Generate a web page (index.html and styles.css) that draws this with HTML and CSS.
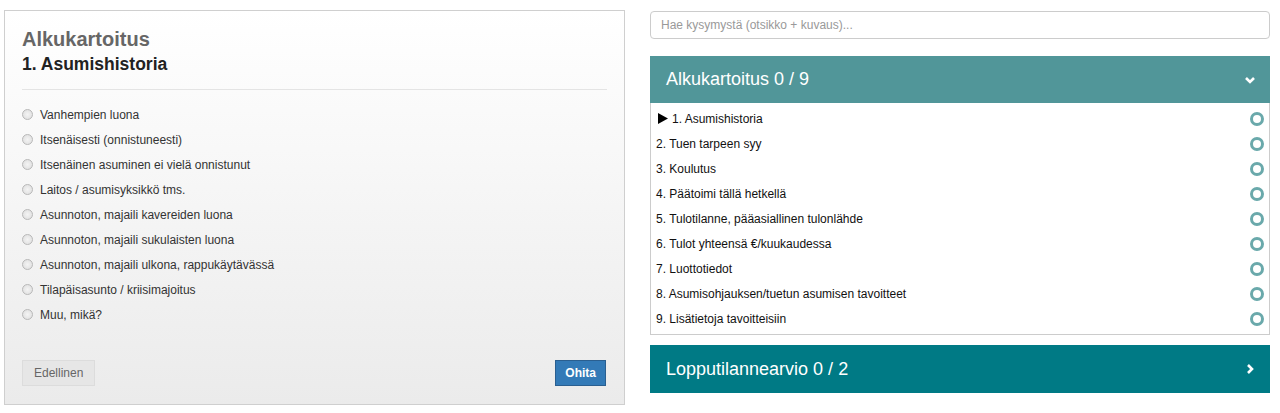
FILE: index.html
```html
<!DOCTYPE html>
<html>
<head>
  <title>Alkukartoitus</title>
  <link rel="stylesheet" href="styles.css">
</head>
<body>
  <div class="page">
    <div class="question-panel">
      <h2 class="survey-title">Alkukartoitus</h2>
      <h3 class="question-title">1. Asumishistoria</h3>
      <hr>
      <ul class="options">
        <li><span class="radio"></span>Vanhempien luona</li>
        <li><span class="radio"></span>Itsenäisesti (onnistuneesti)</li>
        <li><span class="radio"></span>Itsenäinen asuminen ei vielä onnistunut</li>
        <li><span class="radio"></span>Laitos / asumisyksikkö tms.</li>
        <li><span class="radio"></span>Asunnoton, majaili kavereiden luona</li>
        <li><span class="radio"></span>Asunnoton, majaili sukulaisten luona</li>
        <li><span class="radio"></span>Asunnoton, majaili ulkona, rappukäytävässä</li>
        <li><span class="radio"></span>Tilapäisasunto / kriisimajoitus</li>
        <li><span class="radio"></span>Muu, mikä?</li>
      </ul>
      <div class="buttons">
        <button class="btn btn-prev">Edellinen</button>
        <button class="btn btn-skip">Ohita</button>
      </div>
    </div>

    <div class="sidebar">
      <input class="search" type="text" placeholder="Hae kysymystä (otsikko + kuvaus)...">

      <div class="section">
        <div class="section-header open">
          <span>Alkukartoitus 0 / 9</span>
          <svg class="chevron" width="12" height="12" viewBox="0 0 12 12"><path d="M2 4 L6 8 L10 4" fill="none" stroke="#fff" stroke-width="2.6"/></svg>
        </div>
        <ul class="question-list">
          <li><span class="q-name"><svg class="arrow" width="10" height="11" viewBox="0 0 10 11"><path d="M0 0 L10 5.5 L0 11 Z" fill="#000"/></svg>1. Asumishistoria</span><span class="status"></span></li>
          <li><span class="q-name">2. Tuen tarpeen syy</span><span class="status"></span></li>
          <li><span class="q-name">3. Koulutus</span><span class="status"></span></li>
          <li><span class="q-name">4. Päätoimi tällä hetkellä</span><span class="status"></span></li>
          <li><span class="q-name">5. Tulotilanne, pääasiallinen tulonlähde</span><span class="status"></span></li>
          <li><span class="q-name">6. Tulot yhteensä €/kuukaudessa</span><span class="status"></span></li>
          <li><span class="q-name">7. Luottotiedot</span><span class="status"></span></li>
          <li><span class="q-name">8. Asumisohjauksen/tuetun asumisen tavoitteet</span><span class="status"></span></li>
          <li><span class="q-name">9. Lisätietoja tavoitteisiin</span><span class="status"></span></li>
        </ul>
      </div>

      <div class="section">
        <div class="section-header closed">
          <span>Lopputilannearvio 0 / 2</span>
          <svg class="chevron" width="12" height="12" viewBox="0 0 12 12"><path d="M4 2 L8 6 L4 10" fill="none" stroke="#fff" stroke-width="2.6"/></svg>
        </div>
      </div>
    </div>
  </div>
</body>
</html>
```
FILE: styles.css
```css
/* Layout */
body {
  font-family: "Liberation Sans", Arial, sans-serif;
  margin: 0;
  padding: 0;
  color: #333;
}
.page {
  display: flex;
  gap: 25px;
  padding: 10px 10px 0 4px;
}

/* Question panel */
.question-panel {
  width: 621px;
  height: 395px;
  box-sizing: border-box;
  border: 1px solid #cfcfcf;
  background: linear-gradient(#ffffff, #ebebeb);
  padding: 16px 17px 0 17px;
  display: flex;
  flex-direction: column;
}
.survey-title {
  margin: 0;
  font-size: 20px;
  font-weight: bold;
  color: #666;
  line-height: 24px;
}
.question-title {
  margin: 1px 0 0 0;
  font-size: 17.5px;
  font-weight: bold;
  color: #222;
  line-height: 24px;
}
hr {
  border: none;
  border-top: 1px solid #e4e4e4;
  margin: 13px 0 12px 0;
}
.options {
  list-style: none;
  margin: 0;
  padding: 0;
}
.options li {
  display: flex;
  align-items: center;
  height: 25px;
  font-size: 12px;
  color: #333;
}
.radio {
  width: 9px;
  height: 9px;
  border: 1px solid #b8b8b8;
  border-radius: 50%;
  background: radial-gradient(#f4f4f4, #dcdcdc);
  margin: 0 7px 0 0;
}
.buttons {
  margin-top: auto;
  margin-bottom: 18px;
  display: flex;
  justify-content: space-between;
}
.btn {
  font-family: "Liberation Sans", Arial, sans-serif;
  font-size: 12px;
  height: 26px;
  padding: 0 11px;
  border-radius: 0;
}
.btn-prev {
  background: #e6e6e6;
  border: 1px solid #dcdcdc;
  color: #666;
  font-weight: normal;
}
.btn-skip {
  background: #337ab7;
  border: 1px solid #2a5f90;
  color: #fff;
  font-weight: bold;
  padding: 0 9px;
  margin-right: 1px;
}

/* Sidebar */
.sidebar {
  width: 620px;
  padding-top: 1px;
}
.search {
  width: 100%;
  height: 28px;
  box-sizing: border-box;
  border: 1px solid #ccc;
  border-radius: 4px;
  padding: 0 10px;
  font-family: "Liberation Sans", Arial, sans-serif;
  font-size: 12px;
  margin-bottom: 17px;
}
.search::placeholder {
  color: #999;
}
.section {
  margin-bottom: 10px;
}
.section-header {
  height: 47px;
  display: flex;
  align-items: center;
  justify-content: space-between;
  padding: 0 16px;
  color: #fff;
  font-size: 18px;
}
.section-header.open {
  background: #519699;
}
.section-header.closed {
  background: #007a85;
  height: 48px;
}
.chevron {
  margin-right: -2px;
}
.question-list {
  list-style: none;
  margin: 0;
  padding: 3px 0 3px 0;
  border: 1px solid #ccc;
  border-top: none;
}
.question-list li {
  height: 25px;
  display: flex;
  align-items: center;
  justify-content: space-between;
  padding: 0 5px 0 5px;
  font-size: 12px;
  color: #111;
}
.q-name {
  display: flex;
  align-items: center;
}
.arrow {
  margin: 0 4px 0 2px;
}
.status {
  width: 8px;
  height: 8px;
  border: 3px solid #6aa9ab;
  border-radius: 50%;
}
```
